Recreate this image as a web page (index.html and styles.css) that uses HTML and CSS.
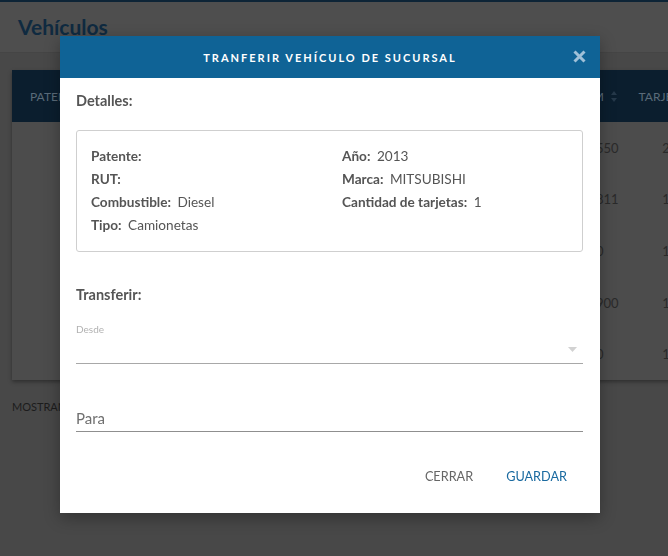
FILE: index.html
```html
<!DOCTYPE html>
<html lang="es">
<head>
    <meta charset="UTF-8">
    <meta name="viewport" content="width=device-width, initial-scale=1.0">
    <title>Vehículos</title>
    <link rel="stylesheet" href="styles.css">
</head>
<body>
<div class="topline"></div>
<div class="page-head">
    <h1 class="page-title">Vehículos</h1>
</div>
<div class="table-card">
    <div class="t-row t-head">
        <div class="t-cell first">Patente</div>
        <div class="t-cell num">KM
            <svg class="sort" width="6" height="11" viewBox="0 0 6 11"><path d="M3 0 L6 4 L0 4 Z M0 7 L6 7 L3 11 Z"/></svg>
        </div>
        <div class="t-cell mid">Tarjetas</div>
    </div>
    <div class="t-row"><div class="t-cell first"></div><div class="t-cell val">550</div><div class="t-cell mid">2</div></div>
    <div class="t-row"><div class="t-cell first"></div><div class="t-cell val">811</div><div class="t-cell mid">1</div></div>
    <div class="t-row"><div class="t-cell first"></div><div class="t-cell val">0</div><div class="t-cell mid">1</div></div>
    <div class="t-row"><div class="t-cell first"></div><div class="t-cell val">900</div><div class="t-cell mid">1</div></div>
    <div class="t-row"><div class="t-cell first"></div><div class="t-cell val">0</div><div class="t-cell mid">1</div></div>
</div>
<div class="page-foot">Mostrando 1 a 5</div>

<div class="modal">
    <div class="modal-header">
        <span class="modal-title">Tranferir vehículo de sucursal</span>
        <svg class="modal-close" width="13" height="13" viewBox="0 0 13 13"><path d="M1.5 1.5 L11.5 11.5 M11.5 1.5 L1.5 11.5"/></svg>
    </div>
    <div class="modal-body">
        <h5 class="section-title">Detalles:</h5>
        <div class="details">
            <div class="detail-col">
                <div class="detail"><span class="label">Patente:</span></div>
                <div class="detail"><span class="label">RUT:</span></div>
                <div class="detail"><span class="label">Combustible:</span> Diesel</div>
                <div class="detail"><span class="label">Tipo:</span> Camionetas</div>
            </div>
            <div class="detail-col">
                <div class="detail"><span class="label">Año:</span> 2013</div>
                <div class="detail"><span class="label">Marca:</span> MITSUBISHI</div>
                <div class="detail"><span class="label">Cantidad de tarjetas:</span> 1</div>
            </div>
        </div>

        <h5 class="section-title transfer">Transferir:</h5>
        <div class="field">
            <label class="field-label">Desde</label>
            <div class="select-line">
                <svg class="caret" width="9" height="5" viewBox="0 0 9 5"><path d="M0 0 L9 0 L4.5 5 Z"/></svg>
            </div>
        </div>
        <div class="field para">
            <div class="input-line">Para</div>
        </div>

        <div class="modal-actions">
            <button class="btn-flat">Cerrar</button>
            <button class="btn-flat primary">Guardar</button>
        </div>
    </div>
</div>
</body>
</html>
```

FILE: styles.css
```css
html, body {
    margin: 0;
    height: 100%;
    overflow: hidden;
}
body {
    background-color: #484848;
    font-family: Lato, "Open Sans", sans-serif;
}
.topline {
    height: 2px;
    background-color: #0d2436;
}
.page-head {
    height: 50px;
    background-color: #4e4e4e;
    border-bottom: 1px solid #454545;
    padding-left: 18px;
    display: flex;
    align-items: center;
}
.page-title {
    margin: 0;
    font-size: 21px;
    font-weight: 700;
    color: #0f2a40;
    position: relative;
    top: -1px;
}
.table-card {
    margin: 17px 0 0 12px;
    width: 700px;
    background-color: #4c4c4c;
    box-shadow: 0 2px 4px rgba(0, 0, 0, 0.35);
}
.t-row {
    display: grid;
    grid-template-columns: 520px 100px 80px;
    height: 51.6px;
    align-items: center;
    font-size: 13px;
    color: #2a2a2a;
}
.t-head {
    height: 52px;
    background-color: #0b1e2e;
    color: #5a6b79;
    font-size: 12px;
    text-transform: uppercase;
}
.t-cell.first {
    padding-left: 18px;
}
.t-cell.num {
    text-align: right;
    padding-right: 15px;
}
.t-cell.val {
    padding-left: 64px;
}
.t-cell.mid {
    text-align: center;
    padding-right: 12px;
}
.sort {
    fill: #26394a;
    margin-left: 4px;
    vertical-align: -1px;
}
.page-foot {
    margin: 20px 0 0 12px;
    font-size: 11px;
    text-transform: uppercase;
    color: #1c1c1c;
}

/* modal */
.modal {
    position: fixed;
    left: 60px;
    top: 36px;
    width: 540px;
    height: 477px;
    background-color: #fff;
    box-shadow: 0 5px 15px rgba(0, 0, 0, 0.3);
}
.modal-header {
    height: 42px;
    background-color: #0f6396;
    display: flex;
    align-items: center;
    justify-content: center;
    position: relative;
}
.modal-title {
    color: #fff;
    font-size: 11px;
    font-weight: 700;
    letter-spacing: 2px;
    text-transform: uppercase;
}
.modal-close {
    position: absolute;
    right: 14px;
    top: 14px;
    stroke: #9fc0d8;
    stroke-width: 3;
}
.modal-body {
    padding: 13px 17px 0 16px;
    color: #555;
}
.section-title {
    margin: 0;
    font-size: 14.5px;
    font-weight: 700;
    line-height: 20px;
    color: #555;
}
.details {
    margin-top: 19px;
    border: 1px solid #cfcfcf;
    border-radius: 3px;
    padding: 14px;
    height: 92px;
    display: grid;
    grid-template-columns: 251px 1fr;
}
.detail {
    font-size: 13.6px;
    line-height: 23px;
    color: #555;
}
.label {
    font-weight: 700;
    margin-right: 3px;
}
.section-title.transfer {
    margin-top: 33px;
}
.field {
    margin-top: 18px;
}
.field-label {
    display: block;
    font-size: 10px;
    line-height: 12px;
    color: #b2b2b2;
}
.select-line {
    height: 28px;
    border-bottom: 1px solid #a8a8a8;
    display: flex;
    justify-content: flex-end;
    align-items: center;
    padding-right: 6px;
}
.caret {
    fill: #d2d2d2;
}
.field.para {
    margin-top: 45px;
}
.input-line {
    height: 22px;
    font-size: 15px;
    line-height: 18px;
    color: #6f6f6f;
    border-bottom: 1px solid #8f8f8f;
}
.modal-actions {
    margin-top: 26px;
    display: flex;
    justify-content: flex-end;
    gap: 1px;
}
.btn-flat {
    background: none;
    border: none;
    padding: 10px 16px;
    font-family: Lato, "Open Sans", sans-serif;
    font-size: 12.7px;
    text-transform: uppercase;
    color: #666;
    cursor: pointer;
}
.btn-flat.primary {
    color: #1a6aa0;
}
```
